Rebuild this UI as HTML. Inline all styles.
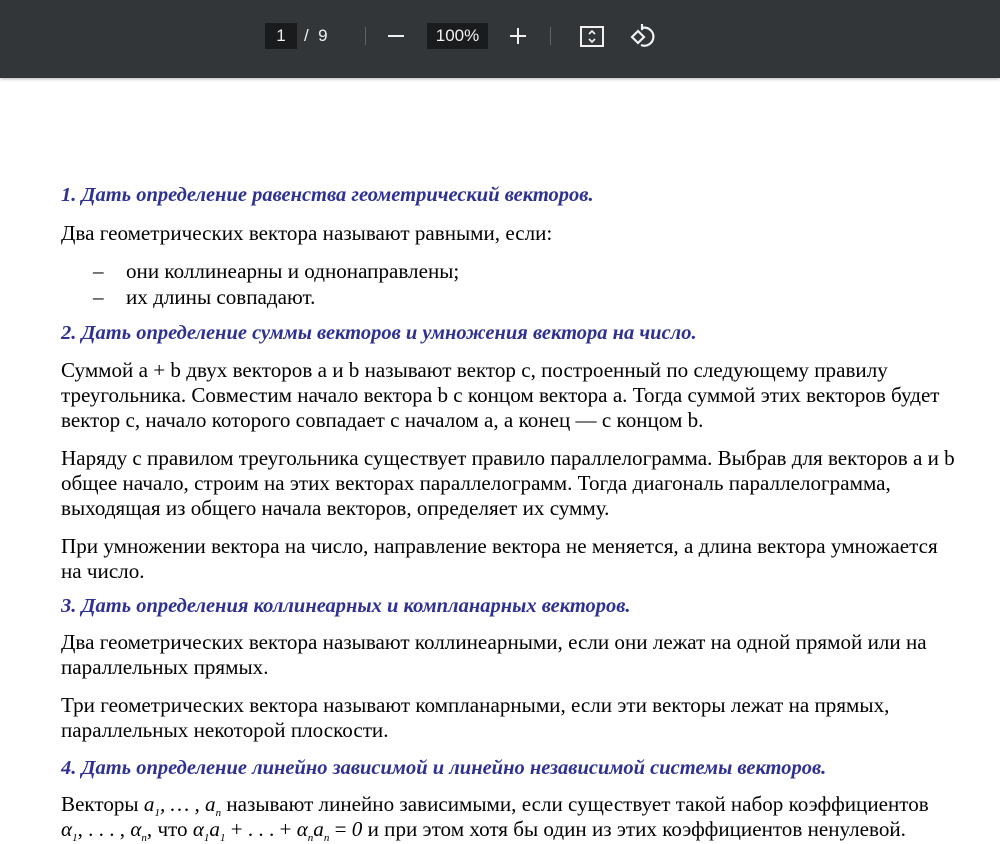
<!DOCTYPE html>
<html><head><meta charset="utf-8"><style>
body{margin:0;width:1000px;height:839px;overflow:hidden;background:#fff;font-family:"Liberation Serif",serif;}
.bar{position:absolute;left:0;top:0;width:1000px;height:78px;background:#323639;box-shadow:0 1px 3px rgba(0,0,0,.3);color:#f1f1f1;font-family:"Liberation Sans",sans-serif;}
.box{position:absolute;background:#191b1c;height:26px;top:23px;font-size:17px;line-height:26px;text-align:center;}
.sep{position:absolute;top:27px;width:1px;height:18px;background:#5f6366;}
.t{position:absolute;left:61px;font-size:21.1px;line-height:25px;color:#000;white-space:nowrap;}
.h{color:#2e3192;font-weight:bold;font-style:italic;font-size:20.5px;}
i{font-style:italic}
sub{font-size:11px;line-height:0}
</style></head><body>
<div class="bar">
<div class="box" style="left:265px;width:32px">1</div>
<div style="position:absolute;left:304px;top:23px;font-size:17px;line-height:26px">/&nbsp;&nbsp;9</div>
<div class="sep" style="left:365px"></div>
<div style="position:absolute;left:388px;top:35px;width:16px;height:2px;background:#f1f1f1"></div>
<div class="box" style="left:427px;width:61px">100%</div>
<div style="position:absolute;left:510px;top:35px;width:16px;height:2px;background:#f1f1f1"></div>
<div style="position:absolute;left:517px;top:28px;width:2px;height:16px;background:#f1f1f1"></div>
<div class="sep" style="left:550px"></div>
<svg style="position:absolute;left:578px;top:23px" width="28" height="28" viewBox="0 0 28 28" fill="none" stroke="#f1f1f1" stroke-width="2"><rect x="3" y="4" width="22" height="19"/><path d="M11 11l3-3 3 3M11 16l3 3 3-3" stroke-width="1.6"/></svg>
<svg style="position:absolute;left:628px;top:22px" width="30" height="30" viewBox="0 0 30 30" fill="none" stroke="#f1f1f1" stroke-width="2.2"><path d="M4 15l6-6 6 6-6 6z"/><path d="M14 6a9 9 0 1 1-1 17"/><path d="M14 2v5h-1" /></svg>
</div>
<div class="t h" style="top:183px">1. Дать определение равенства геометрический векторов.</div>
<div class="t" style="top:221px">Два геометрических вектора называют равными, если:</div>
<div class="t" style="top:259px;left:93px">–</div><div class="t" style="top:259px;left:126px">они коллинеарны и однонаправлены;</div>
<div class="t" style="top:285px;left:93px">–</div><div class="t" style="top:285px;left:126px">их длины совпадают.</div>
<div class="t h" style="top:321px">2. Дать определение суммы векторов и умножения вектора на число.</div>
<div class="t" style="top:358px">Суммой a + b двух векторов a и b называют вектор c, построенный по следующему правилу<br>треугольника. Совместим начало вектора b с концом вектора a. Тогда суммой этих векторов будет<br>вектор c, начало которого совпадает с началом a, а конец — с концом b.</div>
<div class="t" style="top:446px">Наряду с правилом треугольника существует правило параллелограмма. Выбрав для векторов a и b<br>общее начало, строим на этих векторах параллелограмм. Тогда диагональ параллелограмма,<br>выходящая из общего начала векторов, определяет их сумму.</div>
<div class="t" style="top:534px">При умножении вектора на число, направление вектора не меняется, а длина вектора умножается<br>на число.</div>
<div class="t h" style="top:594px">3. Дать определения коллинеарных и компланарных векторов.</div>
<div class="t" style="top:630px">Два геометрических вектора называют коллинеарными, если они лежат на одной прямой или на<br>параллельных прямых.</div>
<div class="t" style="top:693px">Три геометрических вектора называют компланарными, если эти векторы лежат на прямых,<br>параллельных некоторой плоскости.</div>
<div class="t h" style="top:756px">4. Дать определение линейно зависимой и линейно независимой системы векторов.</div>
<div class="t" style="top:792px">Векторы <i>a<sub>1</sub>, … , a<sub>n</sub></i> называют линейно зависимыми, если существует такой набор коэффициентов<br><i>α<sub>1</sub></i>, . . . , <i>α<sub>n</sub></i>, что <i>α<sub>1</sub>a<sub>1</sub></i> + . . . + <i>α<sub>n</sub>a<sub>n</sub></i> = <i>0</i> и при этом хотя бы один из этих коэффициентов ненулевой.</div>
</body></html>
